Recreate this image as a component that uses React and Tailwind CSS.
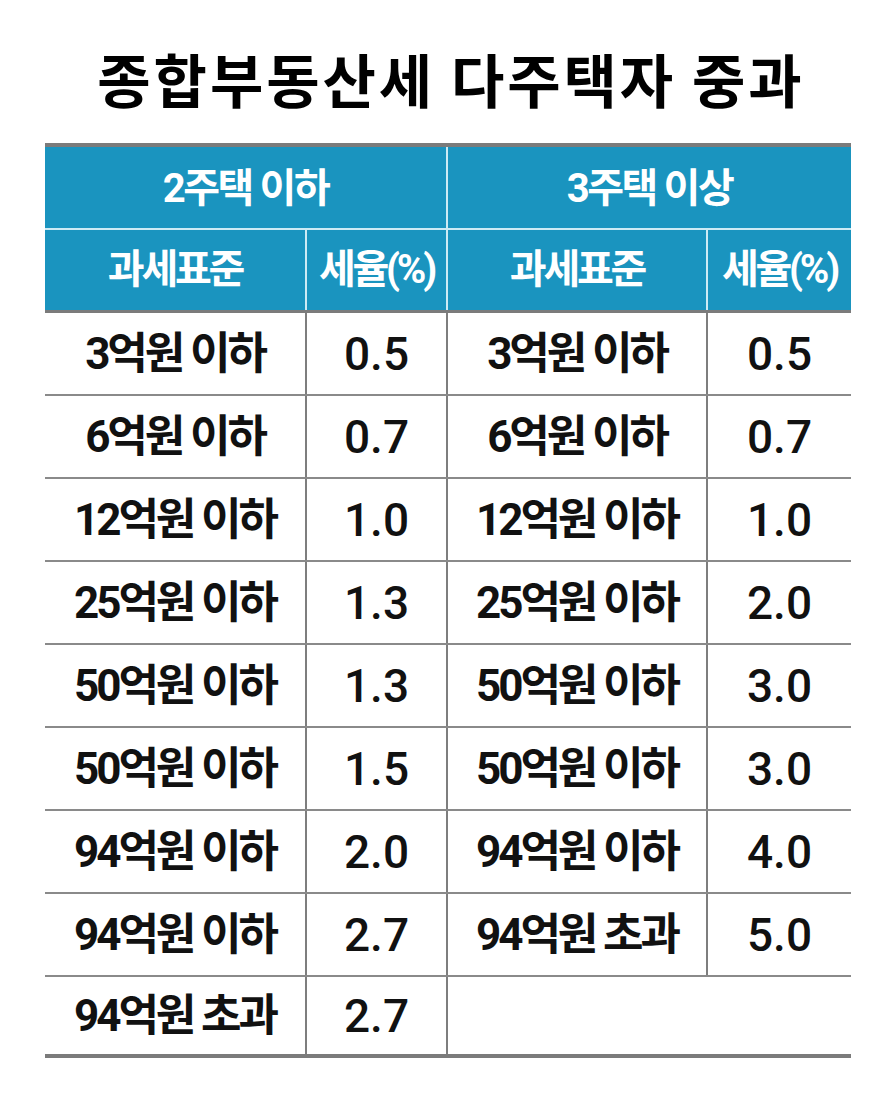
import React from "react";

const F = { fontFamily: '"Roboto", "Noto Sans CJK KR", sans-serif' };

const left = [
  ["3억원 이하", "0.5"],
  ["6억원 이하", "0.7"],
  ["12억원 이하", "1.0"],
  ["25억원 이하", "1.3"],
  ["50억원 이하", "1.3"],
  ["50억원 이하", "1.5"],
  ["94억원 이하", "2.0"],
  ["94억원 이하", "2.7"],
  ["94억원 초과", "2.7"],
];
const right = [
  ["3억원 이하", "0.5"],
  ["6억원 이하", "0.7"],
  ["12억원 이하", "1.0"],
  ["25억원 이하", "2.0"],
  ["50억원 이하", "3.0"],
  ["50억원 이하", "3.0"],
  ["94억원 이하", "4.0"],
  ["94억원 초과", "5.0"],
];

function Label({ children }) {
  return (
    <div className="flex items-center justify-center text-[44px] font-bold text-[#111] tracking-[-0.07em] leading-none">
      {children}
    </div>
  );
}
function Val({ children }) {
  return (
    <div className="flex items-center justify-center text-[46px] font-medium text-[#111] leading-none">
      {children}
    </div>
  );
}

export default function App() {
  return (
    <div className="w-[896px] h-[1101px] bg-white" style={F}>
      <div className="h-[143px] flex items-center justify-center pt-[12px]">
        <h1
          className="text-[58px] font-bold text-black leading-none tracking-[0.05em] pl-[6px]"
          style={{ fontFamily: '"Noto Sans CJK KR", sans-serif' }}
        >
          종합부동산세 다주택자 중과
        </h1>
      </div>
      <div className="ml-[45px] w-[806px] border-t-4 border-[#7b7b7b]">
        <div className="bg-[#1a94bf] text-white font-bold">
          <div className="grid grid-cols-[403px_403px] h-[83px] border-b-2 border-[#cdeaf4]">
            <div className="flex items-center justify-center text-[40px] tracking-[-0.06em] border-r-2 border-[#cdeaf4] leading-none pt-[2px]">
              2주택 이하
            </div>
            <div className="flex items-center justify-center text-[40px] tracking-[-0.06em] leading-none pt-[2px]">
              3주택 이상
            </div>
          </div>
          <div className="grid grid-cols-[262px_141px_260px_143px] h-[80px]">
            <div className="flex items-center justify-center text-[40px] tracking-[-0.08em] border-r-2 border-[#cdeaf4] leading-none">
              과세표준
            </div>
            <div className="flex items-center justify-center text-[40px] tracking-[-0.08em] border-r-2 border-[#cdeaf4] leading-none">
              세율(%)
            </div>
            <div className="flex items-center justify-center text-[40px] tracking-[-0.08em] border-r-2 border-[#cdeaf4] leading-none">
              과세표준
            </div>
            <div className="flex items-center justify-center text-[40px] tracking-[-0.08em] leading-none">
              세율(%)
            </div>
          </div>
        </div>
        <div className="border-t-[3px] border-[#7b7b7b]">
          {left.map((l, i) => {
            const r = right[i];
            const last = i === left.length - 1;
            return (
              <div
                key={i}
                className={
                  "grid grid-cols-[262px_141px_260px_143px] " +
                  (last ? "h-[81px] border-b-4 border-[#7b7b7b]" : "h-[83px] border-b-2 border-[#8a8a8a]")
                }
              >
                <div className="flex items-center justify-center border-r-2 border-[#7e7e7e]">
                  <Label>{l[0]}</Label>
                </div>
                <div className="flex items-center justify-center border-r-2 border-[#7e7e7e]">
                  <Val>{l[1]}</Val>
                </div>
                {r ? (
                  <>
                    <div className="flex items-center justify-center border-r-2 border-[#7e7e7e]">
                      <Label>{r[0]}</Label>
                    </div>
                    <div className="flex items-center justify-center">
                      <Val>{r[1]}</Val>
                    </div>
                  </>
                ) : (
                  <div className="col-span-2" />
                )}
              </div>
            );
          })}
        </div>
      </div>
    </div>
  );
}
